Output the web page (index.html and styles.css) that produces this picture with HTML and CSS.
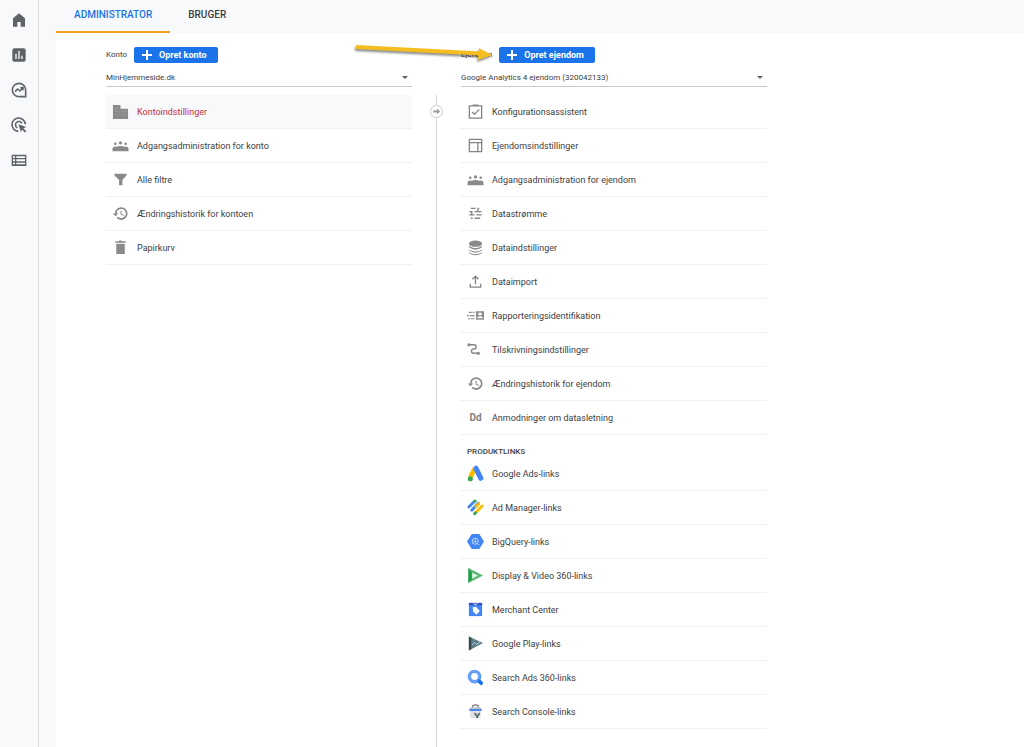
FILE: index.html
```html
<!DOCTYPE html>
<html lang="da">
<head>
<meta charset="utf-8">
<meta name="viewport" content="width=device-width, initial-scale=1">
<title>Administrator</title>
<link rel="stylesheet" href="styles.css">
</head>
<body>
<svg class="sprite" aria-hidden="true">
  <symbol id="people" viewBox="0 0 18 18"><circle cx="3.500" cy="7.200" r="1.400"/><circle cx="9" cy="6.300" r="1.700"/><circle cx="14.500" cy="7.200" r="1.400"/><path d="M.5 15v-2.500q0-2 2.500-2.500 1.500 0 2 .4Q6.500 9.500 9 9.500t4 .9q.5-.4 2-.4 2.500.5 2.500 2.500V15z"/></symbol>
  <symbol id="history" viewBox="0 0 24 24"><path d="M13 3a9 9 0 0 0-9 9H1l4 4 4-4H6.500a6.500 6.500 0 1 1 1.900 4.600l-1.900 1.700A9 9 0 1 0 13 3zm-1 5v5l4.300 2.500.7-1.200-3.500-2.100V8z"/></symbol>
</svg>
<div class="app">
  <nav class="rail" aria-label="Hovedmenu">
    <a href="#" aria-label="Startside"><svg viewBox="0 0 24 24"><path d="M12 2 3 9.500V22h6.500v-7h5v7H21V9.500z"/></svg></a>
    <a href="#" aria-label="Rapporter"><svg viewBox="0 0 24 24"><path fill-rule="evenodd" d="M5 2h14a3 3 0 0 1 3 3v14a3 3 0 0 1-3 3H5a3 3 0 0 1-3-3V5a3 3 0 0 1 3-3zm1.500 8v8h2v-8zm4.500-4v12h2V6zm4.500 7v5h2v-5z"/></svg></a>
    <a href="#" aria-label="Udforsk"><svg viewBox="0 0 24 24"><path class="rail-line" d="M22 12v10H12a10 10 0 1 1 10-10zM6 14.500l4-4 3.500 3 4-4.500M14 8.500h4v4"/></svg></a>
    <a href="#" aria-label="Annoncering"><svg viewBox="0 0 24 24"><path class="rail-line" d="M11 21.500A10 10 0 1 1 21.500 11M9.500 16.500A5.200 5.200 0 1 1 16.500 9.500"/><path d="m11 11 12 4-4.500 1.800 4.500 4.500-2 2-4.500-4.500L15 23z"/></svg></a>
    <a href="#" aria-label="Konfigurer"><svg viewBox="0 0 24 24"><path fill-rule="evenodd" d="M1 4h22v17H1zm2 2.500V9h3V6.500zm5 0V9h13V6.500zM3 11v3h3v-3zm5 0v3h13v-3zm-5 5v2.500h3V16zm5 0v2.500h13V16z"/></svg></a>
  </nav>
  <div class="page">
    <header class="tabs">
      <a class="tab tab-active" href="#" aria-current="page">ADMINISTRATOR</a>
      <a class="tab" href="#">BRUGER</a>
    </header>
    <main class="content">
      <section class="column">
        <div class="column-head">
          <label for="account">Konto</label>
          <button class="create" type="button"><svg viewBox="0 0 10 10"><path d="M5 0v10M0 5h10"/></svg>Opret konto</button>
        </div>
        <div class="picker"><select id="account"><option>MinHjemmeside.dk</option></select></div>
        <ul class="list">
          <li><a class="row row-active" href="#"><svg class="icon" viewBox="0 0 18 18"><path d="M1 2h8v4h8v11H1z"/><path d="M3 5.500h4M3 9h4M3 12.500h4M11 9h4M11 12.500h4" stroke="#b5b5b5" stroke-dasharray="1 2"/></svg>Kontoindstillinger</a></li>
          <li><a class="row" href="#"><svg class="icon"><use href="#people"/></svg>Adgangsadministration for konto</a></li>
          <li><a class="row" href="#"><svg class="icon" viewBox="0 0 18 18"><path d="M2.500 3h13v1.500L11 9.500V15H7.500V9.500l-5-5z"/></svg>Alle filtre</a></li>
          <li><a class="row" href="#"><svg class="icon"><use href="#history"/></svg>Ændringshistorik for kontoen</a></li>
          <li><a class="row" href="#"><svg class="icon" viewBox="0 0 18 18"><path d="M3.500 2.500H7l.7-1h2.600l.7 1h3.500V4h-11zM4.500 5h9v11h-9z"/></svg>Papirkurv</a></li>
        </ul>
      </section>
      <div class="divider">
        <button class="move" type="button" aria-label="Flyt"><svg viewBox="0 0 12 12"><path d="M2.500 4.800h4V3L10 6 6.500 9V7.200h-4z"/></svg></button>
      </div>
      <section class="column">
        <div class="column-head">
          <label for="property">Ejendom</label>
          <button class="create" type="button"><svg viewBox="0 0 10 10"><path d="M5 0v10M0 5h10"/></svg>Opret ejendom</button>
          <svg class="pointer" viewBox="0 0 144 24" aria-hidden="true"><path class="pointer-line" d="M3 5 128 11.500"/><path class="pointer-head" d="m126 6 13 7-14 5z"/></svg>
        </div>
        <div class="picker"><select id="property"><option>Google Analytics 4 ejendom (320042133)</option></select></div>
        <ul class="list">
          <li><a class="row" href="#"><svg class="icon outline" viewBox="0 0 18 18"><path d="M2.500 3h13v13h-13zM6 2.200h6M5.500 9.500 8 12l4.800-5.200"/></svg>Konfigurationsassistent</a></li>
          <li><a class="row" href="#"><svg class="icon outline" viewBox="0 0 18 18"><path d="M2.500 2.500h13v13h-13zM2.500 6h13M11.500 6v9.500"/></svg>Ejendomsindstillinger</a></li>
          <li><a class="row" href="#"><svg class="icon"><use href="#people"/></svg>Adgangsadministration for ejendom</a></li>
          <li><a class="row" href="#"><svg class="icon outline" viewBox="0 0 18 18"><path d="M4 3.500h5M11 3.500h2M2.500 7H6M8 7h7.500M2.500 10.500h5.500M10 10.500h5.500M4 14h2M8 14h6M11.500 4v3M5 7v3"/></svg>Datastrømme</a></li>
          <li><a class="row" href="#"><svg class="icon" viewBox="0 0 18 18"><ellipse cx="9" cy="5" rx="7" ry="3.300"/><path d="M2 7.500q7 4.500 14 0v1.300q-7 5-14 0zM2 11q7 4.500 14 0v1q-7 5-14 0zM2 14q7 4.500 14 0v.8q-7 4.700-14 0z"/></svg>Dataindstillinger</a></li>
          <li><a class="row" href="#"><svg class="icon outline" viewBox="0 0 18 18"><path d="M3.500 11.500V15h11v-3.500M9 12V4M5.800 6.700 9 3.500l3.200 3.200"/></svg>Dataimport</a></li>
          <li><a class="row" href="#"><svg class="icon" viewBox="0 0 18 18"><path d="M2 5h3v1.300H2zm4 0h2v1.300H6zM0 8.400h2v1.300H0zm3 0h5v1.300H3zm-2 3.400h2v1.300H1zm3 0h4v1.300H4z"/><path fill-rule="evenodd" d="M9.500 4.500H18v9H9.500zM12 6v2.700h3.500V6zm-1 6h5.500v-1.500q-2.700-1.500-5.500 0z"/></svg>Rapporteringsidentifikation</a></li>
          <li><a class="row" href="#"><svg class="icon outline" viewBox="0 0 18 18"><path d="M3 4h4.500a2.200 2.200 0 0 1 0 4.500H7a2.200 2.200 0 0 0 0 4.500h4"/><circle cx="2" cy="4" r="1"/><circle cx="12" cy="13" r="1"/></svg>Tilskrivningsindstillinger</a></li>
          <li><a class="row" href="#"><svg class="icon"><use href="#history"/></svg>Ændringshistorik for ejendom</a></li>
          <li><a class="row" href="#"><span class="icon icon-text">Dd</span>Anmodninger om datasletning</a></li>
        </ul>
        <h2 class="group">PRODUKTLINKS</h2>
        <ul class="list">
          <li><a class="row" href="#"><svg class="icon" viewBox="0 0 18 18"><path d="m8 4-4.500 9" stroke="#fbbc04" stroke-width="5"/><path d="m9.500 3.500 5 10.500" stroke="#4285f4" stroke-width="5.500" stroke-linecap="round"/><circle cx="3.500" cy="14.500" r="2.700" fill="#34a853"/></svg>Google Ads-links</a></li>
          <li><a class="row" href="#"><svg class="icon" viewBox="0 0 18 18"><g stroke-width="3" stroke-linecap="round"><path d="M2 8.500 8 2.500" stroke="#4285f4"/><path d="m5 12 7-7.500" stroke="#4285f4"/><path d="m9.500 8 3-3" stroke="#fbbc04"/><path d="m8.500 2.500.3-.3" stroke="#34a853"/><path d="m8.500 15 7.500-7.500" stroke="#fbbc04"/><path d="m8 15.500 1-1" stroke="#34a853"/></g></svg>Ad Manager-links</a></li>
          <li><a class="row" href="#"><svg class="icon" viewBox="0 0 18 18"><path d="M5 1h8l5 8-5 8H5L0 9z" fill="#4285f4"/><circle cx="8.700" cy="8.700" r="3.200" fill="none" stroke="#c6dafc"/><path d="M7.500 8v2M9 7v3M10.500 9v1M11 11l2 2" stroke="#c6dafc"/></svg>BigQuery-links</a></li>
          <li><a class="row" href="#"><svg class="icon" viewBox="0 0 18 18"><path d="M1.500 1 17 9 1.500 17z" fill="#5bb974"/><path d="M1.500 1 5 6v7l-3.500 4z" fill="#1e9e4a"/><path d="m5.500 6 6 3-6 3.500z" fill="#e6f4ea"/></svg>Display &amp; Video 360-links</a></li>
          <li><a class="row" href="#"><svg class="icon" viewBox="0 0 18 18"><path d="M2 2h14v14H2z" fill="#4285f4"/><path d="M2 2h14v2.500H2z" fill="#2a56c6"/><path d="M6 6.500 9.500 6l4 4.500-3.500 4L6.500 11z" fill="#fff"/><path d="M7 2.500q2 3 4 0" fill="none" stroke="#fff"/></svg>Merchant Center</a></li>
          <li><a class="row" href="#"><svg class="icon" viewBox="0 0 18 18"><path d="M2 1.500 17 8.500 2 16.500z" fill="#607d8b"/><path d="M2 1.500 4.500 3v12L2 16.500z" fill="#37474f"/><path d="m5 11 3-3 2 2 4-3" fill="none" stroke="#b9d5de"/></svg>Google Play-links</a></li>
          <li><a class="row" href="#"><svg class="icon" viewBox="0 0 18 18"><circle cx="8" cy="8" r="5.500" fill="none" stroke="#669df6" stroke-width="3.600"/><path d="m13 13 2 2" stroke="#1a73e8" stroke-width="4" stroke-linecap="round"/></svg>Search Ads 360-links</a></li>
          <li><a class="row" href="#"><svg class="icon" viewBox="0 0 18 18"><path d="M6 4.500V3q3-2 6 0v1.500" fill="none" stroke="#757575" stroke-width="1.300"/><path d="M4 4.500h10l2 3H2z" fill="#b0bec5"/><path d="M2.500 6.500h13V8.500h-13z" fill="#4285f4"/><path d="M3.500 8.500h11v7.500h-11z" fill="#e0e0e0"/><path d="M8 10v2.500l1.800 1.200V16h2v-2.300l1.700-1.200V10l-1.700 1v1.500h-2V11z" fill="#455a64"/></svg>Search Console-links</a></li>
        </ul>
      </section>
    </main>
  </div>
</div>
</body>
</html>
```

FILE: styles.css
```css
* { box-sizing: border-box; }

body {
  margin: 0;
  background: #fff;
  color: #3c4043;
  font-family: Roboto, "Liberation Sans", sans-serif;
  font-size: 9px;
  line-height: 12px;
}

a { color: inherit; text-decoration: none; }

.sprite { display: none; }

.app {
  display: flex;
  min-height: 100vh;
}

.rail {
  display: flex;
  flex: none;
  flex-direction: column;
  align-items: center;
  gap: 19px;
  width: 39px;
  padding-top: 12px;
  background: #f8f9fb;
  border-right: 1px solid #dadce0;
}

.rail a, .rail svg { display: block; width: 16px; height: 16px; fill: #5f6368; }
.rail .rail-line { fill: none; stroke: #5f6368; stroke-width: 2.4; }

.page {
  display: flex;
  flex: 1;
  flex-direction: column;
  min-width: 0;
  padding-left: 17px;
  background: #f8f9fb;
}

.tabs { display: flex; }

.tab {
  height: 33px;
  padding: 9px 18px 0;
  border-bottom: 2px solid transparent;
  font-size: 10px;
  font-weight: 500;
}

.tab-active { color: #1a73e8; border-color: #f9a01b; }

.content {
  display: grid;
  flex: 1;
  grid-template-columns: minmax(0, 306px) 49px minmax(0, 306px);
  padding-left: 50px;
  background: #fff;
}

.column { padding: 14px 0 18px; }

.column-head {
  position: relative;
  display: flex;
  align-items: center;
  gap: 7px;
  height: 16px;
  font-size: 8px;
}

.create {
  display: flex;
  align-items: center;
  gap: 7px;
  height: 16px;
  padding: 0 11px 0 8px;
  border: 0;
  border-radius: 2px;
  background: #1a73e8;
  color: #fff;
  font: 700 9px/12px Roboto, "Liberation Sans", sans-serif;
}

.create svg { width: 10px; height: 10px; stroke: #fff; stroke-width: 2; }

.pointer {
  position: absolute;
  top: -5px;
  left: -108px;
  width: 144px;
  height: 24px;
  filter: drop-shadow(-1px 2px 1px rgb(0 0 0 / 45%));
}

.pointer-line { stroke: #f5bd1f; stroke-width: 4; }
.pointer-head { fill: #f5bd1f; }

.picker {
  position: relative;
  height: 24px;
  border-bottom: 1px solid #c8c8c8;
}

.picker::after {
  position: absolute;
  top: 13px;
  right: 4px;
  border: 3px solid transparent;
  border-top-color: #5f6368;
  border-bottom: 0;
  content: "";
}

.picker select {
  width: 100%;
  height: 23px;
  padding: 7px 16px 0 0;
  border: 0;
  background: none;
  color: #3c4043;
  font: 8px/12px Roboto, "Liberation Sans", sans-serif;
  appearance: none;
}

.list { margin: 0; padding: 0; list-style: none; }
.picker + .list { margin-top: 8px; }

.row {
  display: flex;
  align-items: center;
  gap: 8px;
  height: 34px;
  padding-left: 6px;
  border-bottom: 1px solid #f0f0f0;
}

.row-active { background: #f8f9fa; color: #c5303a; }

.icon { flex: none; width: 17px; height: 17px; fill: #8a8a8a; }
.outline { fill: none; stroke: #858585; stroke-width: 1.4; }

.icon-text {
  color: #808080;
  font-size: 10px;
  font-weight: 700;
  line-height: 17px;
  text-align: center;
}

.group {
  margin: 0;
  padding: 11px 0 0 6px;
  font-size: 8px;
  font-weight: 500;
  line-height: 11px;
}

.divider {
  display: flex;
  justify-content: center;
  margin-top: 62px;
  padding-top: 10px;
  background: linear-gradient(#d5d5d5, #d5d5d5) center / 1px 100% no-repeat;
}

.move {
  width: 13px;
  height: 13px;
  padding: 0;
  border: 1px solid #ccc;
  border-radius: 50%;
  background: #fff;
}

.move svg { display: block; width: 11px; height: 11px; fill: #999; }
```
